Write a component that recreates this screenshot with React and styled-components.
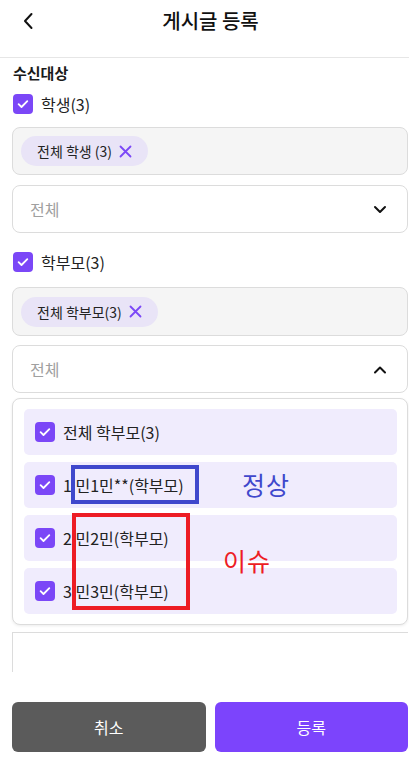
import React from 'react';
import styled, { createGlobalStyle } from 'styled-components';

const Global = createGlobalStyle`
  body {
    margin: 0;
    background: #ffffff;
    font-family: "Noto Sans CJK KR", "Noto Sans", sans-serif;
    color: #1a1a1a;
  }
`

const Page = styled.div`
  width: 409px;
  height: 761px;
  display: flex;
  flex-direction: column;
  overflow: hidden;
  background: #ffffff;
`
const Header = styled.div`
  height: 57px;
  flex: none;
  display: grid;
  grid-template-columns: 56px 1fr 44px;
  align-items: center;
  border-bottom: 1px solid #e6e6e6;
  box-sizing: content-box;
`
const BackBtn = styled.div`
  display: flex;
  justify-content: center;
  align-items: center;
  height: 100%;
  padding-bottom: 16px;
  box-sizing: border-box;
`
const Title = styled.div`
  text-align: center;
  font-size: 20px;
  font-weight: 500;
  color: #111;
  padding-bottom: 16px;
`
const Content = styled.div`
  flex: 1;
  overflow: hidden;
  padding: 4px 1px 0 12px;
  display: flex;
  flex-direction: column;
  & > * {
    flex-shrink: 0;
  }
`
const Label = styled.div`
  font-size: 15px;
  font-weight: 600;
  color: #1a1a1a;
  line-height: 22px;
  padding-left: 1px;
`
const CheckRow = styled.div`
  display: flex;
  align-items: center;
  gap: 8px;
  margin-top: ${p => p.$top}px;
  padding-left: 1px;
  font-size: 16px;
  line-height: 22px;
  color: #222;
`
const ChipBox = styled.div`
  margin-top: ${p => p.$top}px;
  height: ${p => p.$h}px;
  box-sizing: border-box;
  border: 1px solid #dcdcdc;
  border-radius: 8px;
  background: #f5f5f5;
  display: flex;
  align-items: center;
  padding-left: 8px;
`
const Chip = styled.div`
  height: 30px;
  border-radius: 15px;
  background: #e9e4f7;
  display: flex;
  align-items: center;
  gap: 7px;
  padding: 0 16px 0 16px;
  font-size: 14px;
  color: #222;
`
const Select = styled.div`
  margin-top: ${p => p.$top}px;
  height: 48px;
  box-sizing: border-box;
  border: 1px solid #dcdcdc;
  border-radius: 8px;
  background: #fff;
  display: flex;
  align-items: center;
  justify-content: space-between;
  padding: 0 20px 0 17px;
  font-size: 16px;
  color: #a0a0a0;
`
const PanelWrap = styled.div`
  position: relative;
  margin-top: 5px;
`
const Panel = styled.div`
  box-sizing: border-box;
  border: 1px solid #dcdcdc;
  border-radius: 8px;
  background: #fff;
  box-shadow: 0 1px 3px rgba(0, 0, 0, 0.08);
  padding: 10px 10px 10px 11px;
  display: flex;
  flex-direction: column;
  gap: 7px;
`
const Item = styled.div`
  height: 46px;
  border-radius: 5px;
  background: #f0ecfd;
  display: flex;
  align-items: center;
  gap: 8px;
  padding-left: 11px;
  font-size: 16px;
  color: #222;
`
const Mark = styled.div`
  position: absolute;
  left: ${p => p.$x}px;
  top: ${p => p.$y}px;
  width: ${p => p.$w}px;
  height: ${p => p.$h}px;
  box-sizing: border-box;
  border: 4px solid ${p => p.$c};
`
const Note = styled.div`
  position: absolute;
  left: ${p => p.$x}px;
  top: ${p => p.$y}px;
  font-size: 25px;
  line-height: 30px;
  color: ${p => p.$c};
  letter-spacing: 1px;
`
const TextArea = styled.div`
  margin-top: 7px;
  height: 60px;
  border-top: 1px solid #dcdcdc;
  border-left: 1px solid #dcdcdc;
`
const Footer = styled.div`
  flex: none;
  height: 89px;
  box-sizing: border-box;
  padding: 30px 1px 9px 12px;
  display: grid;
  grid-template-columns: 1fr 1fr;
  gap: 9px;
  background: #fff;
`
const Btn = styled.div`
  border-radius: 6px;
  background: ${p => p.$bg};
  color: #fff;
  font-size: 16px;
  display: flex;
  align-items: center;
  justify-content: center;
`

const Check = () => (
  <svg width="20" height="20" viewBox="0 0 20 20">
    <rect width="20" height="20" rx="4" fill="#7b47f7" />
    <path d="M5.6 10.2l2.9 2.8 5.8-5.9" stroke="#fff" strokeWidth="1.8" fill="none" strokeLinecap="round" strokeLinejoin="round" />
  </svg>
)

const Close = () => (
  <svg width="13" height="13" viewBox="0 0 13 13">
    <path d="M1.5 1.5l10 10M11.5 1.5l-10 10" stroke="#7b47f7" strokeWidth="1.8" strokeLinecap="round" />
  </svg>
)

const Chevron = ({ up }) => (
  <svg width="14" height="9" viewBox="0 0 14 9">
    <path d={up ? 'M2 7.5l5-5 5 5' : 'M2 2l5 5 5-5'} stroke="#111" strokeWidth="2" fill="none" strokeLinecap="round" strokeLinejoin="round" />
  </svg>
)

const items = [
  '전체 학부모(3)',
  '1 민1민**(학부모)',
  '2 민2민(학부모)',
  '3 민3민(학부모)',
]

export default function App() {
  return (
    <Page>
      <Global />
      <Header>
        <BackBtn>
          <svg width="12" height="18" viewBox="0 0 12 18">
            <path d="M9.5 2L3 9l6.5 7" stroke="#111" strokeWidth="2" fill="none" strokeLinecap="round" strokeLinejoin="round" />
          </svg>
        </BackBtn>
        <Title>게시글 등록</Title>
        <div />
      </Header>
      <Content>
        <Label>수신대상</Label>
        <CheckRow $top={9}>
          <Check />
          학생(3)
        </CheckRow>
        <ChipBox $top={12} $h={48}>
          <Chip>전체 학생 (3) <Close /></Chip>
        </ChipBox>
        <Select $top={10}>
          전체
          <Chevron />
        </Select>
        <CheckRow $top={18}>
          <Check />
          학부모(3)
        </CheckRow>
        <ChipBox $top={14} $h={49}>
          <Chip>전체 학부모(3) <Close /></Chip>
        </ChipBox>
        <Select $top={9}>
          전체
          <Chevron up />
        </Select>
        <PanelWrap>
          <Panel>
            {items.map(t => (
              <Item key={t}>
                <Check />
                {t}
              </Item>
            ))}
          </Panel>
          <Mark $x={59} $y={67} $w={128} $h={39} $c="#3f48cc" />
          <Note $x={230} $y={71} $c="#3f48cc">정상</Note>
          <Mark $x={60} $y={115} $w={118} $h={97} $c="#ed1c24" />
          <Note $x={211} $y={147} $c="#ed1c24">이슈</Note>
        </PanelWrap>
        <TextArea />
      </Content>
      <Footer>
        <Btn $bg="#5b5b5b">취소</Btn>
        <Btn $bg="#7c44fc">등록</Btn>
      </Footer>
    </Page>
  )
}
